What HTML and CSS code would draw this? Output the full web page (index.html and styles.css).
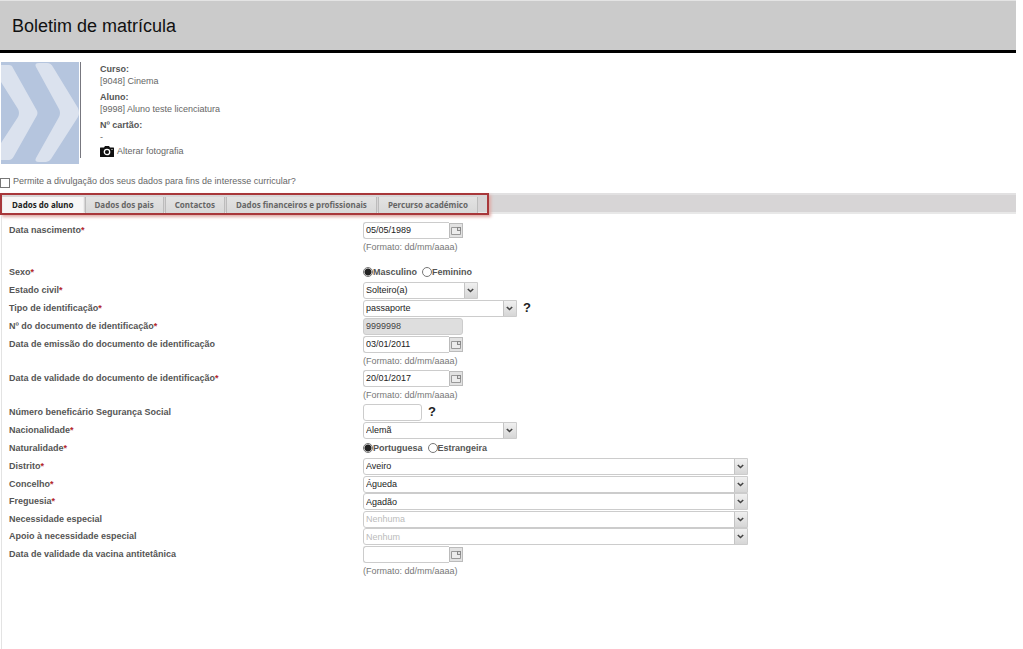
FILE: index.html
```html
<!DOCTYPE html>
<html lang="pt">
<head>
<meta charset="utf-8">
<title>Boletim de matrícula</title>
<link rel="stylesheet" href="styles.css">
</head>
<body>
<svg class="defs" aria-hidden="true">
  <symbol id="cal" viewBox="0 0 12 13">
    <path d="M1.500 3.500h9v7h-9z" fill="#ececec" stroke="#999"/>
    <path d="M7 3h4v4H7z" fill="#888"/>
    <path d="M8 4h2v2H8z" fill="#ddd"/>
  </symbol>
</svg>
<header class="banner"><h1>Boletim de matrícula</h1></header>
<main>
  <section class="profile">
    <svg class="photo" viewBox="0 0 80 102" role="img" aria-label="Fotografia">
      <path d="M0 0h78v102H0z" fill="#b5c5de"/>
      <path d="M0 3h8q3 0 4 3l23 41q3 4 0 8L13 94q-2 4-5 4H0V81L17 55q2-4 0-8L0 20z" fill="#dbe2ee"/>
      <path d="M35 5q-2-4 3-4h8q4 0 6 4l25 41q2 5 0 9L50 97q-2 3-5 3h-7q-5 0-3-4l23-41q2-4 0-8z" fill="#dbe2ee"/>
      <path d="M79.500 0v96" stroke="#77777f"/>
    </svg>
    <div class="details">
      <dl>
        <dt>Curso:</dt><dd>[9048] Cinema</dd>
        <dt>Aluno:</dt><dd>[9998] Aluno teste licenciatura</dd>
        <dt>Nº cartão:</dt><dd>-</dd>
      </dl>
      <a class="photo-link" href="#">
        <svg viewBox="0 0 14 11" width="14" height="11" aria-hidden="true">
          <path d="M0 2q0-.5.5-.5H4L5 0h4l1 1.500h3.500q.5 0 .5.5v8.500q0 .5-.5.5H.5q-.5 0-.5-.5z" fill="#111"/>
          <circle cx="7" cy="6" r="2.700" fill="none" stroke="#fff" stroke-width="1.300"/>
          <path d="M11.500 3h1v1h-1z" fill="#fff"/>
        </svg>
        <span>Alterar fotografia</span>
      </a>
    </div>
  </section>
  <label class="consent"><input type="checkbox"><span>Permite a divulgação dos seus dados para fins de interesse curricular?</span></label>

  <div class="tabbar">
    <div class="tabs" role="tablist">
      <button class="tab active" role="tab" aria-selected="true">Dados do aluno</button>
      <button class="tab" role="tab">Dados dos pais</button>
      <button class="tab" role="tab">Contactos</button>
      <button class="tab" role="tab">Dados financeiros e profissionais</button>
      <button class="tab" role="tab">Percurso académico</button>
    </div>
  </div>

  <form class="form">
    <div class="row spaced"><label for="nasc">Data nascimento<i>*</i></label>
      <div><div class="field"><input class="text date" id="nasc" value="05/05/1989"><button type="button" class="cal" aria-label="Calendário"><svg><use href="#cal"/></svg></button></div><p class="hint">(Formato: dd/mm/aaaa)</p></div></div>
    <div class="row" role="radiogroup" aria-labelledby="sexo"><span class="label" id="sexo">Sexo<i>*</i></span>
      <div class="field radios"><label><input type="radio" name="sexo" checked>Masculino</label><label><input type="radio" name="sexo">Feminino</label></div></div>
    <div class="row"><label for="civil">Estado civil<i>*</i></label>
      <div class="field"><select id="civil" class="small"><option>Solteiro(a)</option></select></div></div>
    <div class="row"><label for="tipo">Tipo de identificação<i>*</i></label>
      <div class="field"><select id="tipo" class="medium"><option>passaporte</option></select><button type="button" class="help" aria-label="Ajuda">?</button></div></div>
    <div class="row"><label for="doc">Nº do documento de identificação<i>*</i></label>
      <div class="field"><input class="text doc" id="doc" value="9999998" readonly></div></div>
    <div class="row"><label for="emis">Data de emissão do documento de identificação</label>
      <div><div class="field"><input class="text date" id="emis" value="03/01/2011"><button type="button" class="cal" aria-label="Calendário"><svg><use href="#cal"/></svg></button></div><p class="hint">(Formato: dd/mm/aaaa)</p></div></div>
    <div class="row"><label for="valid">Data de validade do documento de identificação<i>*</i></label>
      <div><div class="field"><input class="text date" id="valid" value="20/01/2017"><button type="button" class="cal" aria-label="Calendário"><svg><use href="#cal"/></svg></button></div><p class="hint">(Formato: dd/mm/aaaa)</p></div></div>
    <div class="row"><label for="ss">Número beneficário Segurança Social</label>
      <div class="field"><input class="text short" id="ss"><button type="button" class="help" aria-label="Ajuda">?</button></div></div>
    <div class="row"><label for="nac">Nacionalidade<i>*</i></label>
      <div class="field"><select id="nac" class="medium"><option>Alemã</option></select></div></div>
    <div class="row" role="radiogroup" aria-labelledby="nat"><span class="label" id="nat">Naturalidade<i>*</i></span>
      <div class="field radios"><label><input type="radio" name="nat" checked>Portuguesa</label><label><input type="radio" name="nat">Estrangeira</label></div></div>
    <div class="row"><label for="dist">Distrito<i>*</i></label>
      <div class="field"><select id="dist" class="wide"><option>Aveiro</option></select></div></div>
    <div class="row"><label for="conc">Concelho<i>*</i></label>
      <div class="field"><select id="conc" class="wide"><option>Águeda</option></select></div></div>
    <div class="row tight"><label for="freg">Freguesia<i>*</i></label>
      <div class="field"><select id="freg" class="wide"><option>Agadão</option></select></div></div>
    <div class="row"><label for="nec">Necessidade especial</label>
      <div class="field"><select id="nec" class="wide empty"><option>Nenhuma</option></select></div></div>
    <div class="row tight"><label for="apoio">Apoio à necessidade especial</label>
      <div class="field"><select id="apoio" class="wide empty"><option>Nenhum</option></select></div></div>
    <div class="row"><label for="vac">Data de validade da vacina antitetânica</label>
      <div><div class="field"><input class="text date" id="vac"><button type="button" class="cal" aria-label="Calendário"><svg><use href="#cal"/></svg></button></div><p class="hint">(Formato: dd/mm/aaaa)</p></div></div>
  </form>
</main>
</body>
</html>
```
FILE: styles.css
```css
* { box-sizing: border-box; }
body {
  margin: 0;
  padding-right: 7px;
  min-height: 100vh;
  display: flex;
  flex-direction: column;
  background: #fff;
  color: #666;
  font: 9px/12px "Liberation Sans", Arial, sans-serif;
}
button, input, select { font: inherit; margin: 0; }
.defs { position: absolute; width: 0; height: 0; }
.banner {
  padding: 14px 12px 13px;
  background: #cbcbcb;
  border-top: 1px solid #e4e4e4;
  border-bottom: 3px solid #000;
  margin-bottom: 9px;
}
h1 { margin: 0; font-size: 18px; line-height: 22px; font-weight: 400; color: #111; }
main { flex: 1; display: flex; flex-direction: column; }
.profile { display: flex; gap: 19px; padding-left: 1px; }
.photo { width: 80px; height: 102px; }
.details { padding-top: 1px; }
dl { margin: 0; }
dt { font-weight: 700; color: #555; }
dd { margin: 0 0 4px; }
dd:last-child { margin: 0; }
.photo-link { display: flex; align-items: center; gap: 3px; margin-top: 2px; color: inherit; text-decoration: none; }
.consent { display: flex; align-items: flex-start; gap: 3px; height: 14px; margin-top: 11px; }
.consent input {
  appearance: none;
  width: 10px;
  height: 10px;
  margin-top: 3px;
  background: #fff;
  border: 1px solid #777;
}
.tabbar {
  display: flex;
  margin-top: 4px;
  background: linear-gradient(#e2e1e2 0 2px, #d7d5d6 2px 19px, #e8e8e8 19px 21px, transparent 21px);
}
.tabs {
  display: flex;
  gap: 1px;
  height: 22px;
  padding: 2px 9px 0 0;
  border: 2px solid #a8373a;
  box-shadow: 2px 2px 3px #dfaaa5;
}
.tab {
  padding: 0 9px;
  border: 1px solid #bcbcbc;
  border-width: 0 1px;
  background: linear-gradient(#e3e3e3, #d8d8d8);
  color: #666;
  font: 700 8px/16px "Noto Sans", Verdana, sans-serif;
  white-space: nowrap;
}
.tab.active { background: #f7f6f6; color: #222; border-color: #eee; }
.form { flex: 1; padding: 6px 0 0 7px; margin-left: 1px; border-left: 1px solid #e3e3e3; }
.row { display: grid; grid-template-columns: 354px 1fr; }
.row > label, .label { line-height: 18px; font-weight: 700; color: #555; }
.row i { font-style: normal; color: #b3262b; }
.spaced { margin-bottom: 8px; }
.field { display: flex; align-items: center; height: 18px; }
.tight .field { height: 17px; }
.tight > label { line-height: 17px; }
.hint { margin: 0; line-height: 16px; color: #777; }
.text, select {
  height: 17px;
  padding: 0 2px;
  border: 1px solid #ccc;
  border-radius: 3px;
  background: #fff;
  color: #222;
}
.date { width: 86px; border-radius: 3px 0 0 3px; border-right: 0; }
.doc { width: 100px; background: #dedede; color: #444; }
.short { width: 59px; }
.cal { width: 14px; height: 15px; padding: 0; border: 1px solid #bbb; background: #e2e2e2; }
.cal svg { display: block; width: 12px; height: 13px; }
select {
  appearance: none;
  border-radius: 3px 0 0 3px;
  background:
    url("data:image/svg+xml,%3Csvg xmlns='http://www.w3.org/2000/svg' width='7' height='5'%3E%3Cpath d='M.8 1l2.700 2.500L6.200 1' fill='none' stroke='%23444' stroke-width='1.600'/%3E%3C/svg%3E") right 3px center no-repeat,
    linear-gradient(90deg, #c4c4c4 1px, transparent 1px) right / 13px 100% no-repeat,
    linear-gradient(#f0f0f0, #d6d6d6) right / 13px 100% no-repeat,
    #fff;
}
.small { width: 115px; }
.medium { width: 154px; }
.wide { width: 385px; }
.empty { color: #bbb; }
.help { padding: 0; margin-left: 6px; border: 0; background: none; color: #222; font-weight: 700; font-size: 13px; line-height: 16px; }
.radios { gap: 5px; font-weight: 700; color: #555; }
.radios label { display: flex; align-items: center; }
.radios input {
  appearance: none;
  width: 10px;
  height: 10px;
  border: 1px solid #777;
  border-radius: 50%;
  background: #fff;
}
.radios input:checked { background: radial-gradient(circle, #222 0 3px, #fff 4px); }
```
